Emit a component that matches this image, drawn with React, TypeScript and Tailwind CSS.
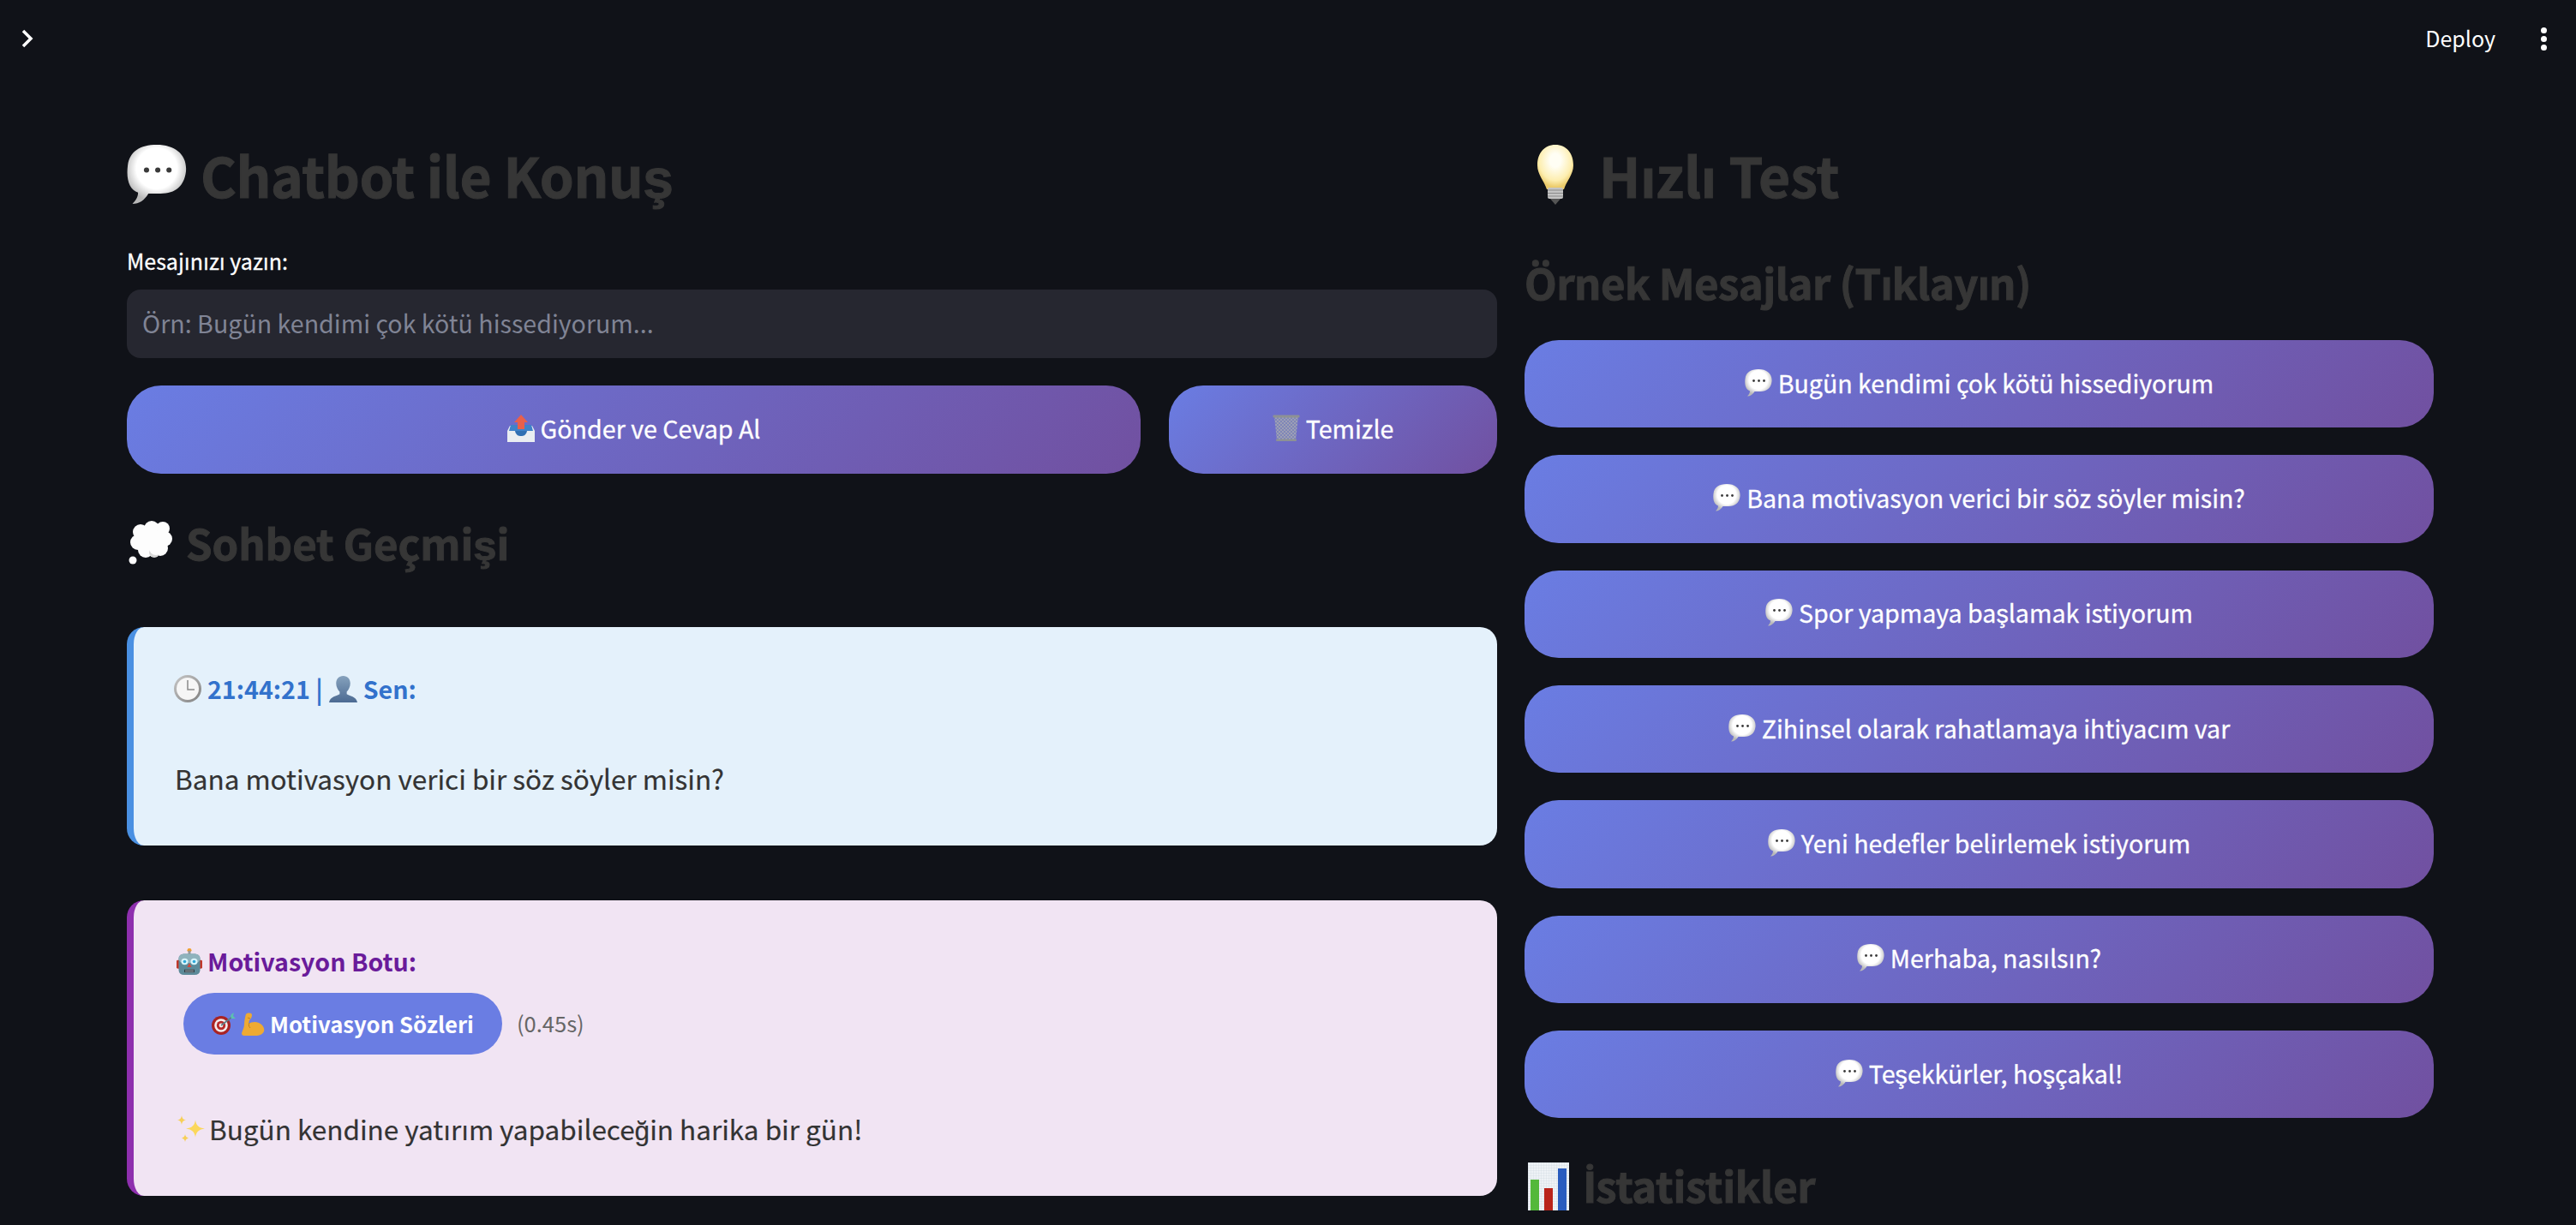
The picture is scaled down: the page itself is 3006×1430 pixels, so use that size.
import React from "react";

const Speech = ({ s, id }: { s: number; id: string }) => (
  <svg width={s} height={s} viewBox="0 0 64 64" className="shrink-0">
    <defs>
      <radialGradient id={id} cx="50%" cy="40%" r="56%">
        <stop offset="0.62" stopColor="#ffffff" />
        <stop offset="1" stopColor="#b8b8b8" />
      </radialGradient>
    </defs>
    <path d="M32 0C14 0 3 7 1 22c-2 16 2 26 11 29 0 5-3 9-6 12 7 0 13-4 17-11h13c16 0 25-8 27-23C65 11 52 0 32 0Z" fill={`url(#${id})`} />
    <circle cx="21" cy="27" r="2.800" fill="#3a3a3a" />
    <circle cx="33" cy="27" r="2.800" fill="#3a3a3a" />
    <circle cx="45" cy="27" r="2.800" fill="#3a3a3a" />
  </svg>
);

const Thought = () => (
  <svg width="52" height="52" viewBox="0 0 52 52" className="shrink-0">
    <g fill="#fdfdfd">
      <circle cx="27" cy="10" r="9" />
      <circle cx="40" cy="10" r="8" />
      <circle cx="14" cy="14" r="9" />
      <circle cx="42" cy="22" r="9" />
      <circle cx="11" cy="26" r="9" />
      <circle cx="25" cy="24" r="14" />
      <circle cx="37" cy="33" r="9" />
      <circle cx="20" cy="35" r="9" />
      <circle cx="5" cy="47" r="4.500" />
    </g>
    <circle cx="30" cy="38" r="6" fill="#d8d8d8" />
    <circle cx="32" cy="33" r="8" fill="#fdfdfd" />
  </svg>
);

const Bulb = () => (
  <svg width="42" height="70" viewBox="0 0 42 70" className="shrink-0">
    <defs>
      <radialGradient id="bulbg" cx="50%" cy="35%" r="60%">
        <stop offset="0.25" stopColor="#fffef4" />
        <stop offset="0.75" stopColor="#fdeeb0" />
        <stop offset="1" stopColor="#eccb6a" />
      </radialGradient>
    </defs>
    <path d="M21 0C8 0 0 10 0 24c0 11 8 18 11 28h20c3-10 11-17 11-28C42 10 34 0 21 0Z" fill="url(#bulbg)" />
    <rect x="12" y="50" width="18" height="13" rx="2" fill="#c4c4c4" />
    <path d="M12 53h18M12 56.500h18M12 60h18" stroke="#8a8a8a" strokeWidth="1.200" />
    <path d="M15 63h12l-6 7Z" fill="#555" />
  </svg>
);

const Tray = () => (
  <svg width="32" height="32" viewBox="0 0 32 32" className="shrink-0">
    <path d="M3 13h26l3 6v13H0V19Z" fill="#e9edf1" />
    <path d="M4 12h24l2 7H2Z" fill="#3f82c9" />
    <path d="M9 19c1 5 4 6 7 6s6-1 7-6Z" fill="#2f6fb3" />
    <path d="M16 0l8 9h-4v8h-8V9H8Z" fill="#e8604c" />
  </svg>
);

const Basket = () => (
  <svg width="32" height="32" viewBox="0 0 32 32" className="shrink-0">
    <defs>
      <pattern id="mesh" width="4" height="4" patternUnits="userSpaceOnUse">
        <rect width="4" height="4" fill="#7f86b8" />
        <path d="M0 0l4 4M4 0L0 4" stroke="#a4a6b4" strokeWidth="0.800" />
      </pattern>
    </defs>
    <path d="M2 2h28l-3 28H5Z" fill="url(#mesh)" />
    <rect x="0.500" y="0.500" width="31" height="3" rx="1" fill="#8d9194" />
    <rect x="4" y="28.500" width="24" height="2.500" rx="1" fill="#8d9194" />
  </svg>
);

const Clock = () => (
  <svg width="32" height="32" viewBox="0 0 32 32" className="shrink-0">
    <defs>
      <linearGradient id="rim" x1="0" y1="0" x2="1" y2="1">
        <stop offset="0" stopColor="#c8c8c8" />
        <stop offset="1" stopColor="#808080" />
      </linearGradient>
    </defs>
    <circle cx="16" cy="16" r="16" fill="url(#rim)" />
    <circle cx="16" cy="16" r="13" fill="#f6f6f6" />
    <path d="M16 6v11h8" fill="none" stroke="#8a8a8a" strokeWidth="1.500" />
  </svg>
);

const Bust = () => (
  <svg width="33" height="31" viewBox="0 0 32 32" preserveAspectRatio="none" className="shrink-0">
    <defs>
      <linearGradient id="bustg" x1="0" y1="0" x2="0" y2="1">
        <stop offset="0" stopColor="#86a2bd" />
        <stop offset="1" stopColor="#4b6a92" />
      </linearGradient>
    </defs>
    <path d="M16 0c5 0 8 4 8 9 0 4-2 8-4 10v3c3 2 11 3 12 10H0c1-7 9-8 12-10v-3c-2-2-4-6-4-10 0-5 3-9 8-9Z" fill="url(#bustg)" />
  </svg>
);

const Robot = () => (
  <svg width="30" height="31" viewBox="0 0 30 34" preserveAspectRatio="none" className="shrink-0">
    <circle cx="15" cy="2.500" r="2.500" fill="#f0a030" />
    <rect x="13.500" y="3" width="3" height="5" fill="#999" />
    <rect x="0" y="15" width="4" height="11" rx="1.500" fill="#c0392b" />
    <rect x="26" y="15" width="4" height="11" rx="1.500" fill="#c0392b" />
    <rect x="2.500" y="7" width="25" height="27" rx="6" fill="#5d8a99" />
    <rect x="2.500" y="7" width="25" height="12" rx="6" fill="#8fb3bd" />
    <circle cx="9.500" cy="17" r="4" fill="#d8f4fb" />
    <circle cx="20.500" cy="17" r="4" fill="#d8f4fb" />
    <circle cx="9.500" cy="17" r="1.800" fill="#2fa8d8" />
    <circle cx="20.500" cy="17" r="1.800" fill="#2fa8d8" />
    <path d="M15 19l2.500 5h-5Z" fill="#d1483c" />
    <rect x="9" y="27" width="12" height="4" rx="1" fill="#2d3b42" />
    <path d="M11 27v4M13 27v4M15 27v4M17 27v4M19 27v4" stroke="#cfd8dc" strokeWidth="0.700" />
  </svg>
);

const Dart = () => (
  <svg width="29" height="26" viewBox="0 0 29 26" className="shrink-0">
    <circle cx="11" cy="15" r="11" fill="#a92323" />
    <circle cx="11" cy="15" r="7.800" fill="#f4ecec" />
    <circle cx="11" cy="15" r="5.200" fill="#b82b2b" />
    <circle cx="11" cy="15" r="2.400" fill="#f4ecec" />
    <path d="M11 15L24 5" stroke="#5d7f88" strokeWidth="1.600" />
    <path d="M22 4l1 3 5 0-3-3 1-4-3 2Z" fill="#5cc0b0" />
  </svg>
);

const Muscle = () => (
  <svg width="27" height="27" viewBox="0 0 27 27" className="shrink-0">
    <path d="M5 2c2-2 7-2 7 1 0 3-2 5-3 6l-1 4c3-2 8-3 12-1 5 2 7 7 6 10-1 3-5 5-10 5H3c-2 0-3-1-3-3 1-3 3-7 3-10 0-4 1-9 2-12Z" fill="#eeaa33" />
    <path d="M10 7l-3-1M9 12c-1 2-1 4 1 6" fill="none" stroke="#c4811e" strokeWidth="1" />
  </svg>
);

const Sparkles = () => (
  <svg width="34" height="31" viewBox="0 0 34 34" preserveAspectRatio="none" className="shrink-0">
    <path d="M22 6c1 7 4 10 11 11-7 1-10 4-11 11-1-7-4-10-11-11 7-1 10-4 11-11Z" fill="#fbd75b" />
    <path d="M6 0c.5 4 2 5.500 5 6-3 .5-4.500 2-5 6-.5-4-2-5.500-5-6 3-.5 4.500-2 5-6Z" fill="#f7cf57" />
    <path d="M10 24c.5 3 1.500 4 4 5-2.500 1-3.500 2-4 5-.5-3-1.500-4-4-5 2.500-1 3.500-2 4-5Z" fill="#f7cf57" />
  </svg>
);

const Bars = () => (
  <svg width="48" height="56" viewBox="0 0 48 56" className="shrink-0">
    <defs>
      <pattern id="grid" width="3" height="3" patternUnits="userSpaceOnUse">
        <rect width="3" height="3" fill="#eef2f6" />
        <path d="M0 0h3M0 0v3" stroke="#c8d2dc" strokeWidth="0.500" />
      </pattern>
    </defs>
    <rect width="48" height="56" fill="url(#grid)" />
    <rect x="3" y="20" width="10" height="36" fill="#53b83a" />
    <rect x="19" y="30" width="10" height="26" fill="#b9231a" />
    <rect x="35" y="7" width="10" height="49" fill="#2a5cbe" />
  </svg>
);

const grad = "bg-[linear-gradient(135deg,#6a7de3_0%,#7150a0_100%)]";

const Btn = ({ className, children }: { className: string; children: React.ReactNode }) => (
  <button className={`${className} ${grad} flex items-center justify-center gap-[7px] rounded-[40px] pb-[3px] text-[28.6px] leading-[40px] text-white [-webkit-text-stroke:0.3px_#ffffff]`}>
    {children}
  </button>
);

const samples = [
  "Bugün kendimi çok kötü hissediyorum",
  "Bana motivasyon verici bir söz söyler misin?",
  "Spor yapmaya başlamak istiyorum",
  "Zihinsel olarak rahatlamaya ihtiyacım var",
  "Yeni hedefler belirlemek istiyorum",
  "Merhaba, nasılsın?",
  "Teşekkürler, hoşçakal!",
];

export default function App() {
  return (
    <div className="h-[1430px] w-[3006px] overflow-hidden bg-[#101218] font-['Noto_Sans_CJK_SC',sans-serif]">
      <header className="flex h-[90px] items-center justify-between pl-[22px] pr-[34px]">
        <svg width="20" height="24" viewBox="0 0 20 24" fill="none" stroke="#ffffff" strokeWidth="3.500">
          <path d="M5 3l9 9-9 9" />
        </svg>
        <div className="flex items-center gap-[53px]">
          <span className="pb-[2px] text-[25px] leading-[36px] text-white">Deploy</span>
          <span className="flex flex-col gap-[3px]">
            <span className="size-[7px] rounded-full bg-white" />
            <span className="size-[7px] rounded-full bg-white" />
            <span className="size-[7px] rounded-full bg-white" />
          </span>
        </div>
      </header>

      <main className="flex gap-[32px] pl-[148px] pt-[63px]">
        <section className="w-[1599px] shrink-0">
          <h2 className="flex h-[104px] items-center gap-[16px] pb-[3px] text-[64px] font-bold leading-[100px] tracking-[-0.45px] text-[#363636] [-webkit-text-stroke:1px_#363636]">
            <Speech s={70} id="sp0" />
            <span className="pb-[2px]">Chatbot ile Konuş</span>
          </h2>
          <label className="mt-[27px] block text-[25px] leading-[40px] text-white [-webkit-text-stroke:0.3px_#ffffff]">Mesajınızı yazın:</label>
          <div className="mt-[14px] flex h-[80px] items-center rounded-[16px] bg-[#262730] pb-[2px] pl-[18px] text-[28.6px] text-[#808495]">
            Örn: Bugün kendimi çok kötü hissediyorum...
          </div>
          <div className="mt-[32px] flex gap-[33px]">
            <Btn className="h-[103px] w-[1183px]">
              <Tray />
              Gönder ve Cevap Al
            </Btn>
            <Btn className="h-[103px] w-[383px]">
              <Basket />
              Temizle
            </Btn>
          </div>
          <h3 className="mt-[41px] flex h-[80px] items-center gap-[15px] pb-[3px] pl-[2px] text-[49px] font-bold leading-[76px] text-[#363636] [-webkit-text-stroke:1px_#363636]">
            <Thought />
            Sohbet Geçmişi
          </h3>

          <div className="mt-[58px] h-[255px] rounded-[20px] border-l-[8px] border-[#4a90e2] bg-[#e4f1fb] pl-[50px] pt-[52px]">
            <div className="flex h-[40px] items-center gap-[7px] text-[28.6px] font-bold leading-[40px] text-[#3272cc]">
              <span className="-ml-[3px]"><Clock /></span>
              21:44:21 | <Bust /> Sen:
            </div>
            <p className="-ml-[2px] mt-[64px] text-[31.5px] leading-[40px] text-[#333333] [-webkit-text-stroke:0.2px_#333333]">Bana motivasyon verici bir söz söyler misin?</p>
          </div>

          <div className="mt-[64px] h-[345px] rounded-[20px] border-l-[8px] border-[#8e2fae] bg-[#f1e4f3] pl-[50px] pt-[51px]">
            <div className="flex h-[40px] items-center gap-[6px] text-[28.6px] font-bold leading-[40px] text-[#6a1b9a]">
              <Robot />
              Motivasyon Botu:
            </div>
            <div className="mt-[17px] flex items-center">
              <span className="ml-[8px] flex h-[72px] w-[372px] items-center justify-center gap-[6px] rounded-[36px] bg-[#6a7de3] text-[25.7px] font-bold text-white">
                <Dart />
                <Muscle />
                Motivasyon Sözleri
              </span>
              <span className="ml-[17px] pb-[2px] text-[25.5px] text-[#666666]">(0.45s)</span>
            </div>
            <p className="mt-[66px] flex items-center gap-[4px] text-[31.5px] leading-[40px] text-[#333333] [-webkit-text-stroke:0.2px_#333333]">
              <Sparkles />
              Bugün kendine yatırım yapabileceğin harika bir gün!
            </p>
          </div>
        </section>

        <section className="w-[1061px] shrink-0">
          <h2 className="flex h-[104px] items-center gap-[30px] pb-[3px] pl-[15px] text-[64px] font-bold leading-[100px] text-[#363636] [-webkit-text-stroke:1px_#363636]">
            <Bulb />
            <span className="pb-[2px]">Hızlı Test</span>
          </h2>
          <h3 className="mt-[32px] h-[83px] text-[49px] font-bold leading-[80px] tracking-[-0.5px] text-[#363636] [-webkit-text-stroke:1px_#363636]">Örnek Mesajlar (Tıklayın)</h3>
          <div className="mt-[25px] flex flex-col gap-[32px]">
            {samples.map((t, i) => (
              <Btn key={t} className="h-[102.33px] w-full">
                <Speech s={32} id={`sp${i + 1}`} />
                {t}
              </Btn>
            ))}
          </div>
          <h2 className="mt-[40px] flex h-[80px] items-center gap-[17px] pl-[4px] text-[49px] font-bold leading-[80px] tracking-[-0.3px] text-[#363636] [-webkit-text-stroke:1px_#363636]">
            <Bars />
            <span>
              <span className="font-['Roboto',sans-serif] text-[50px]">İ</span>statistikler
            </span>
          </h2>
        </section>
      </main>
    </div>
  );
}
